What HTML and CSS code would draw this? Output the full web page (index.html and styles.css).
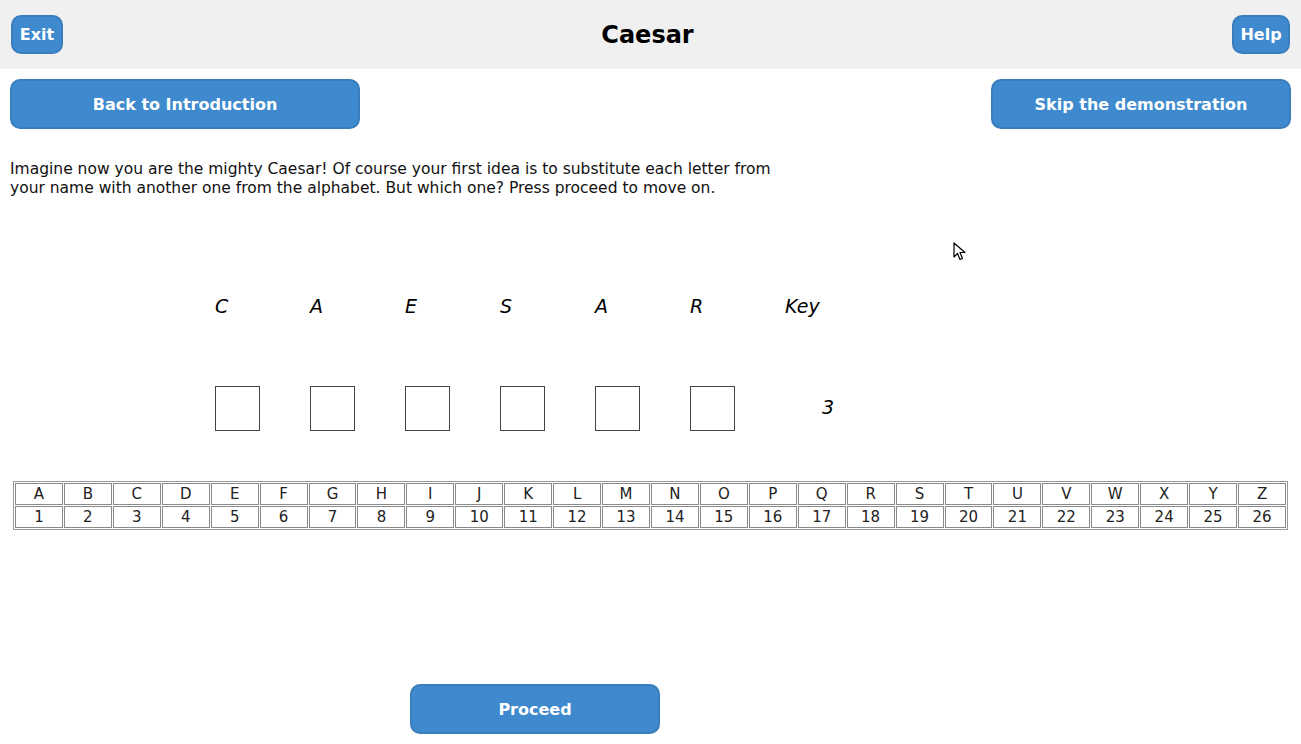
FILE: index.html
```html
<!DOCTYPE html>
<html>
<head>
<meta charset="utf-8">
<link rel="stylesheet" href="styles.css">
</head>
<body>
<header class="topbar">
  <button class="btn small exit">Exit</button>
  <h1 class="title">Caesar</h1>
  <button class="btn small help">Help</button>
</header>
<div class="navrow">
  <button class="btn wide">Back to Introduction</button>
  <button class="btn skip">Skip the demonstration</button>
</div>
<p class="intro">Imagine now you are the mighty Caesar! Of course your first idea is to substitute each letter from<br>your name with another one from the alphabet. But which one? Press proceed to move on.</p>
<div class="letters">
  <span>C</span><span>A</span><span>E</span><span>S</span><span>A</span><span>R</span><span>Key</span>
</div>
<div class="boxes">
  <span class="box"></span><span class="box"></span><span class="box"></span><span class="box"></span><span class="box"></span><span class="box"></span><span class="keyval">3</span>
</div>
<table class="alpha">
  <tr><td>A</td><td>B</td><td>C</td><td>D</td><td>E</td><td>F</td><td>G</td><td>H</td><td>I</td><td>J</td><td>K</td><td>L</td><td>M</td><td>N</td><td>O</td><td>P</td><td>Q</td><td>R</td><td>S</td><td>T</td><td>U</td><td>V</td><td>W</td><td>X</td><td>Y</td><td>Z</td></tr>
  <tr><td>1</td><td>2</td><td>3</td><td>4</td><td>5</td><td>6</td><td>7</td><td>8</td><td>9</td><td>10</td><td>11</td><td>12</td><td>13</td><td>14</td><td>15</td><td>16</td><td>17</td><td>18</td><td>19</td><td>20</td><td>21</td><td>22</td><td>23</td><td>24</td><td>25</td><td>26</td></tr>
</table>
<div class="proceedrow">
  <button class="btn proceed">Proceed</button>
</div>
<svg class="cursor" width="14" height="20" viewBox="0 0 14 20"><path d="M1 1 L1 15 L4.5 11.5 L7 17.5 L9.5 16.5 L7 10.5 L12 10.5 Z" fill="#fff" stroke="#000" stroke-width="1.2" stroke-linejoin="round"/></svg>
</body>
</html>
```
FILE: styles.css
```css
html, body {
  margin: 0;
  padding: 0;
  background: #fff;
  font-family: "DejaVu Sans", sans-serif;
  color: #000;
}
body {
  position: relative;
  width: 1301px;
  height: 744px;
  overflow: hidden;
}
.topbar {
  height: 69px;
  background: #f0f0f0;
  display: flex;
  align-items: center;
  justify-content: space-between;
  padding: 0 11px 0 11px;
  box-sizing: border-box;
}
.title {
  margin: 0;
  font-size: 24px;
  font-weight: bold;
}
.btn {
  background: #3f8ace;
  border: 2px solid #3a7dbd;
  border-radius: 10px;
  color: #fff;
  font-family: "DejaVu Sans", sans-serif;
  font-weight: bold;
  font-size: 16px;
  box-sizing: border-box;
  padding: 0;
  cursor: pointer;
}
.btn.small {
  height: 39px;
  font-size: 16px;
  border-radius: 10px;
}
.btn.exit { width: 52px; }
.btn.help { width: 58px; }
.navrow {
  display: flex;
  justify-content: space-between;
  padding: 10px 10px 0 10px;
}
.btn.wide {
  width: 350px;
  height: 50px;
}
.btn.skip {
  width: 300px;
  height: 50px;
}
.intro {
  margin: 31px 0 0 10px;
  font-family: "DejaVu Sans", sans-serif;
  font-size: 15.5px;
  line-height: 19px;
  color: #111;
}
.letters {
  display: flex;
  margin: 97px 0 0 215px;
  font-style: italic;
  font-size: 19px;
  height: 22px;
  line-height: 22px;
}
.letters span {
  width: 95px;
}
.boxes {
  display: flex;
  align-items: center;
  margin: 69px 0 0 215px;
  height: 45px;
}
.box {
  width: 45px;
  height: 45px;
  box-sizing: border-box;
  border: 1px solid #444;
  margin-right: 50px;
}
.keyval {
  font-style: italic;
  font-size: 19px;
  margin-left: 37px;
  position: relative;
  top: -2px;
}
.alpha {
  margin: 50px 0 0 13px;
  width: 1275px;
  border: 1px solid #999;
  border-spacing: 1px;
  table-layout: fixed;
}
.alpha td {
  border: 1px solid #8a8a8a;
  text-align: center;
  font-family: "DejaVu Sans", sans-serif;
  font-size: 15px;
  height: 20px;
  padding: 0;
  line-height: 20px;
  color: #222;
}
.proceedrow {
  display: flex;
  margin: 154px 0 0 410px;
}
.btn.proceed {
  width: 250px;
  height: 50px;
}
.cursor {
  position: absolute;
  left: 953px;
  top: 242px;
}
```
